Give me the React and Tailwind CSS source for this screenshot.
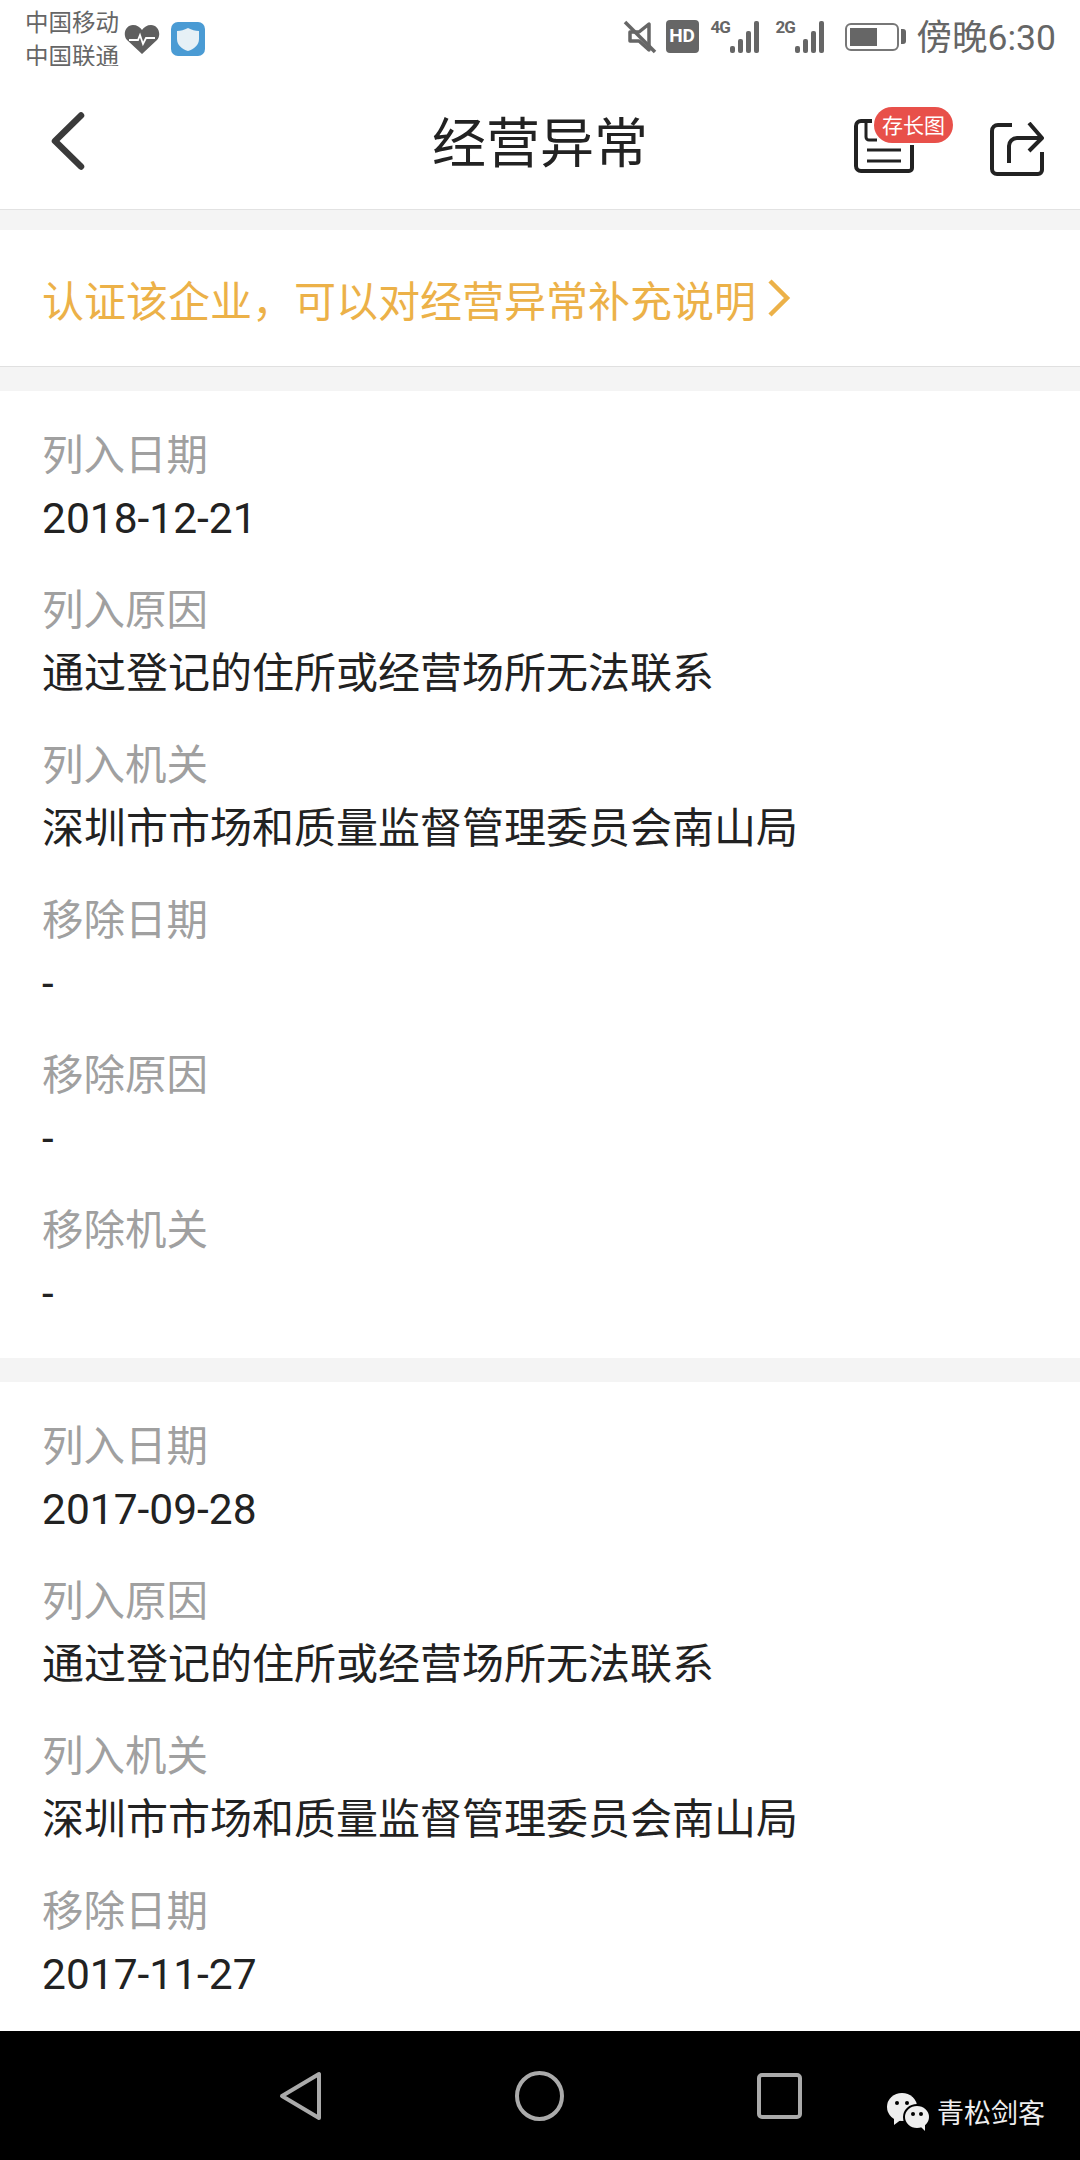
const font = { fontFamily: '"Noto Sans CJK SC", sans-serif' };

const recordA = [
  ["列入日期", "2018-12-21"],
  ["列入原因", "通过登记的住所或经营场所无法联系"],
  ["列入机关", "深圳市市场和质量监督管理委员会南山局"],
  ["移除日期", "-"],
  ["移除原因", "-"],
  ["移除机关", "-"],
];

const recordB = [
  ["列入日期", "2017-09-28"],
  ["列入原因", "通过登记的住所或经营场所无法联系"],
  ["列入机关", "深圳市市场和质量监督管理委员会南山局"],
  ["移除日期", "2017-11-27"],
];

const Signal = ({ label }) => (
  <div className="relative w-[53px] h-[34px]">
    <span className="absolute left-0 top-[-3px] text-[17px] leading-[20px] font-bold tracking-[-1px] text-[#666] font-['Roboto',sans-serif]">{label}</span>
    <svg width="53" height="34" viewBox="0 0 53 34" className="absolute left-0 top-0">
      <rect x="19" y="26" width="5" height="7" rx="2" fill="#666" />
      <rect x="27" y="19" width="5" height="14" rx="2" fill="#666" />
      <rect x="35" y="11" width="5" height="22" rx="2" fill="#666" />
      <rect x="43" y="1" width="5" height="32" rx="2" fill="#666" />
    </svg>
  </div>
);

const StatusBar = () => (
  <div className="h-[66px] flex items-start justify-between pl-[25px] pr-[24px] bg-white">
    <div className="flex items-center pt-[4px]">
      <div className="text-[23.5px] leading-[34px] text-[#666]" style={font}>
        <div>中国移动</div>
        <div>中国联通</div>
      </div>
      <svg width="36" height="32" viewBox="0 0 36 32" className="ml-[5px] mt-[2px]">
        <path d="M18 31 3 17C-2 11 2 2 9 2c4 0 7 2 9 5 2-3 5-5 9-5 7 0 11 9 6 15Z" fill="#5f5f5f" />
        <path d="M5 17h9l2-5 3 9 3-6h9" fill="none" stroke="#fff" strokeWidth="1.8" />
      </svg>
      <svg width="34" height="34" viewBox="0 0 34 34" className="ml-[11px] mt-[1px]">
        <rect width="34" height="34" rx="7" fill="#4a9bd4" />
        <path d="M17 6c4 2 7 3 11 3v8c0 6-5 10-11 12C11 27 6 23 6 17V9c4 0 7-1 11-3Z" fill="#e6f0f6" />
      </svg>
    </div>
    <div className="flex items-center pt-[17px]">
      <svg width="34" height="34" viewBox="0 0 34 34" fill="none" stroke="#666" strokeWidth="3.5">
        <path d="M26 4v26l-10-9H7V12h9Z" strokeLinejoin="round" />
        <path d="M2 2l30 30" />
      </svg>
      <div className="ml-[9px] w-[33px] h-[33px] rounded-[4px] bg-[#666] text-white text-[19px] font-bold flex items-center justify-center font-['Roboto',sans-serif]">HD</div>
      <div className="ml-[12px]"><Signal label="4G" /></div>
      <div className="ml-[12px]"><Signal label="2G" /></div>
      <div className="ml-[16px] flex items-center">
        <div className="w-[54px] h-[28px] rounded-[6px] border-2 border-[#777] p-[3px]">
          <div className="w-[27px] h-full bg-[#666]" />
        </div>
        <div className="ml-[2px] w-[5px] h-[15px] rounded-r-[3px] bg-[#666]" />
      </div>
      <span className="ml-[11px] text-[35.5px] leading-[36px] text-[#666]" style={font}>傍晚<span className="font-['Roboto',sans-serif]">6:30</span></span>
    </div>
  </div>
);

const Header = () => (
  <div className="h-[144px] shrink-0 grid grid-cols-[1fr_auto_1fr] items-center bg-white border-b border-[#e2e2e2]">
    <div className="pl-[48px] pt-[6px]">
      <svg width="44" height="66" viewBox="0 0 44 66" fill="none" stroke="#3a3a3a" strokeWidth="6.5" strokeLinecap="round" strokeLinejoin="round" className="block">
        <path d="M33 7.5 7 33l26 25.5" />
      </svg>
    </div>
    <h1 className="text-[54px] leading-[72px] pt-[4px] font-normal text-[#222]" style={font}>经营异常</h1>
    <div className="flex justify-end pr-[36px] gap-[76px] pt-[20px]">
      <div className="relative w-[60px] h-[54px]">
        <svg width="60" height="54" viewBox="0 0 60 54" fill="none" stroke="#222" strokeWidth="4">
          <path d="M18 2H7a5 5 0 0 0-5 5v40a5 5 0 0 0 5 5h48a3 3 0 0 0 3-3V26" strokeLinejoin="round" />
          <path d="M12 4v14a3 3 0 0 0 3 3h8" strokeWidth="3" />
          <path d="M13 31h34M13 42h34" strokeWidth="3" />
        </svg>
        <span className="absolute left-[20px] top-[-12px] w-[79px] h-[36px] rounded-full bg-[#e8504a] text-white text-[21px] leading-[34px] text-center" style={font}>存长图</span>
      </div>
      <svg width="54" height="54" viewBox="0 0 54 54" fill="none" stroke="#222" strokeWidth="4" strokeLinejoin="round" className="mt-[3px]">
        <path d="M22 3H8a6 6 0 0 0-6 6v38a5 5 0 0 0 5 5h41a4 4 0 0 0 4-4V30" />
        <path d="M19 41V24a8 8 0 0 1 8-8h24" />
        <path d="M39 1l13 15-13 13" />
      </svg>
    </div>
  </div>
);

const Banner = () => (
  <div className="h-[137px] shrink-0 flex items-center pl-[42px] bg-white border-b border-[#e0e0e0] text-[42px] text-[#ecb148]" style={font}>
    <span>认证该企业，可以对经营异常补充说明</span>
    <svg width="26" height="40" viewBox="0 0 26 40" fill="none" stroke="#ecb148" strokeWidth="4.5" className="ml-[10px]">
      <path d="M4 3l17 17L4 37" />
    </svg>
  </div>
);

const Record = ({ rows, grow }) => (
  <section className={`bg-white px-[42px] pt-[36px] pb-[39px] flex flex-col gap-[38px] ${grow ? "flex-1" : "shrink-0"}`}>
    {rows.map(([label, value], i) => (
      <div key={i} className="flex flex-col gap-[17px]">
        <div className="text-[41.5px] leading-[50px] text-[#a0a0a0]" style={font}>{label}</div>
        <div className={`leading-[50px] text-[#222] ${/\d/.test(value) ? "text-[42.5px]" : "text-[42px]"}`} style={{ fontFamily: '"Roboto", "Noto Sans CJK SC", sans-serif' }}>{value}</div>
      </div>
    ))}
  </section>
);

const NavBar = () => (
  <div className="relative h-[129px] shrink-0 bg-black flex items-center justify-center gap-[193px] pl-[1px]">
    <svg width="43" height="50" viewBox="0 0 43 50" fill="none" stroke="#aaa" strokeWidth="4" strokeLinejoin="round">
      <path d="M40 3v44L3 25Z" />
    </svg>
    <svg width="49" height="50" viewBox="0 0 49 50" fill="none" stroke="#aaa" strokeWidth="4">
      <ellipse cx="24.5" cy="25" rx="22.5" ry="23" />
    </svg>
    <svg width="45" height="46" viewBox="0 0 45 46" fill="none" stroke="#aaa" strokeWidth="4">
      <rect x="2" y="2" width="41" height="42" rx="3" />
    </svg>
    <div className="absolute left-[886px] top-[61px] flex items-center gap-[7px]">
      <svg width="44" height="40" viewBox="0 0 44 40">
        <ellipse cx="16" cy="15" rx="15" ry="14" fill="#eee" />
        <path d="M8 25l0 8 8-6Z" fill="#eee" />
        <ellipse cx="31" cy="25" rx="13" ry="12" fill="#eee" stroke="#000" strokeWidth="2" />
        <path d="M35 35l4 4 0-7Z" fill="#eee" />
        <circle cx="11" cy="11" r="2" fill="#000" />
        <circle cx="21" cy="11" r="2" fill="#000" />
        <circle cx="27" cy="22" r="2" fill="#000" />
        <circle cx="35" cy="22" r="2" fill="#000" />
      </svg>
      <span className="text-[27px] leading-[36px] text-[#eee]" style={font}>青松剑客</span>
    </div>
  </div>
);

export default function App() {
  return (
    <div className="w-[1080px] h-[2160px] flex flex-col overflow-hidden bg-[#f4f4f4]">
      <StatusBar />
      <Header />
      <div className="flex-1 overflow-hidden flex flex-col pt-[20px] gap-[24px]">
        <Banner />
        <Record rows={recordA} />
        <Record rows={recordB} grow />
      </div>
      <NavBar />
    </div>
  );
}
